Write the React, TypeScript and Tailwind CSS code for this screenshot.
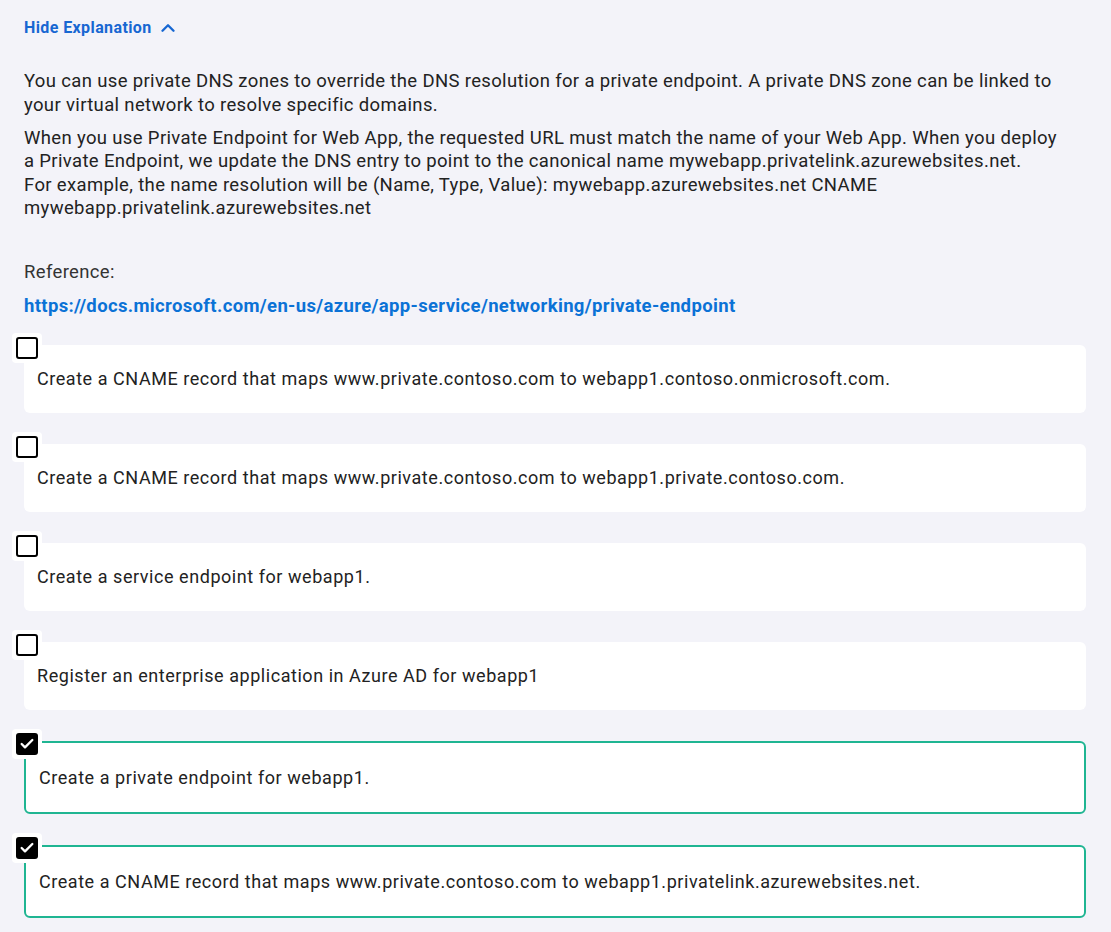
import { Check, ChevronUp } from 'lucide-react'

const options = [
  { text: 'Create a CNAME record that maps www.private.contoso.com to webapp1.contoso.onmicrosoft.com.', checked: false },
  { text: 'Create a CNAME record that maps www.private.contoso.com to webapp1.private.contoso.com.', checked: false },
  { text: 'Create a service endpoint for webapp1.', checked: false },
  { text: 'Register an enterprise application in Azure AD for webapp1', checked: false },
  { text: 'Create a private endpoint for webapp1.', checked: true },
  { text: 'Create a CNAME record that maps www.private.contoso.com to webapp1.privatelink.azurewebsites.net.', checked: true },
]

export default function App() {
  return (
    <div className="min-h-[932px] bg-[#f3f3f9] pl-6 pr-[25px] pt-[16px] pb-4 text-[#222] font-['Roboto',sans-serif]">
      {/* Toggle */}
      <button className="flex items-center gap-[5px] text-[16px] tracking-[0.4px] font-bold text-[#1767d2]">
        Hide Explanation
        <ChevronUp className="w-[22px] h-[22px]" strokeWidth={2.6} />
      </button>

      {/* Explanation */}
      <div className="mt-[30px] text-[18.5px] tracking-[0.35px] leading-[23.5px] max-w-[1046px]">
        <p>
          You can use private DNS zones to override the DNS resolution for a private endpoint. A private DNS zone can be linked to
          your virtual network to resolve specific domains.
        </p>
        <p className="mt-[9.5px]">
          When you use Private Endpoint for Web App, the requested URL must match the name of your Web App. When you deploy a
          Private Endpoint, we update the DNS entry to point to the canonical name mywebapp.privatelink.azurewebsites.net.
          <br />
          For example, the name resolution will be (Name, Type, Value): mywebapp.azurewebsites.net CNAME
          mywebapp.privatelink.azurewebsites.net
        </p>
        <p className="mt-[40px] text-[#333]">Reference:</p>
        <a className="block mt-[11px] font-bold tracking-[0.35px] text-[#0b72d6]">
          https://docs.microsoft.com/en-us/azure/app-service/networking/private-endpoint
        </a>
      </div>

      {/* Options */}
      <div className="mt-[18px] flex flex-col gap-[23px]">
        {options.map((o, i) => (
          <div key={i} className="relative pt-2">
            <div className="absolute -left-3 -top-1 p-1 bg-white rounded-sm">
              {o.checked ? (
                <div className="w-[22px] h-[22px] rounded-[3px] bg-black flex items-center justify-center">
                  <Check className="w-4 h-4 text-white" strokeWidth={3.5} />
                </div>
              ) : (
                <div className="w-[22px] h-[22px] rounded-[3px] border-2 border-black bg-white" />
              )}
            </div>
            <div
              className={
                o.checked
                  ? 'bg-white rounded-md border-2 border-[#1fb592] min-h-[73px] flex items-center px-[13px] text-[18px] tracking-[0.55px]'
                  : 'bg-white rounded-md min-h-[68px] flex items-center px-[13px] text-[18px] tracking-[0.55px]'
              }
            >
              {o.text}
            </div>
          </div>
        ))}
      </div>
    </div>
  )
}
